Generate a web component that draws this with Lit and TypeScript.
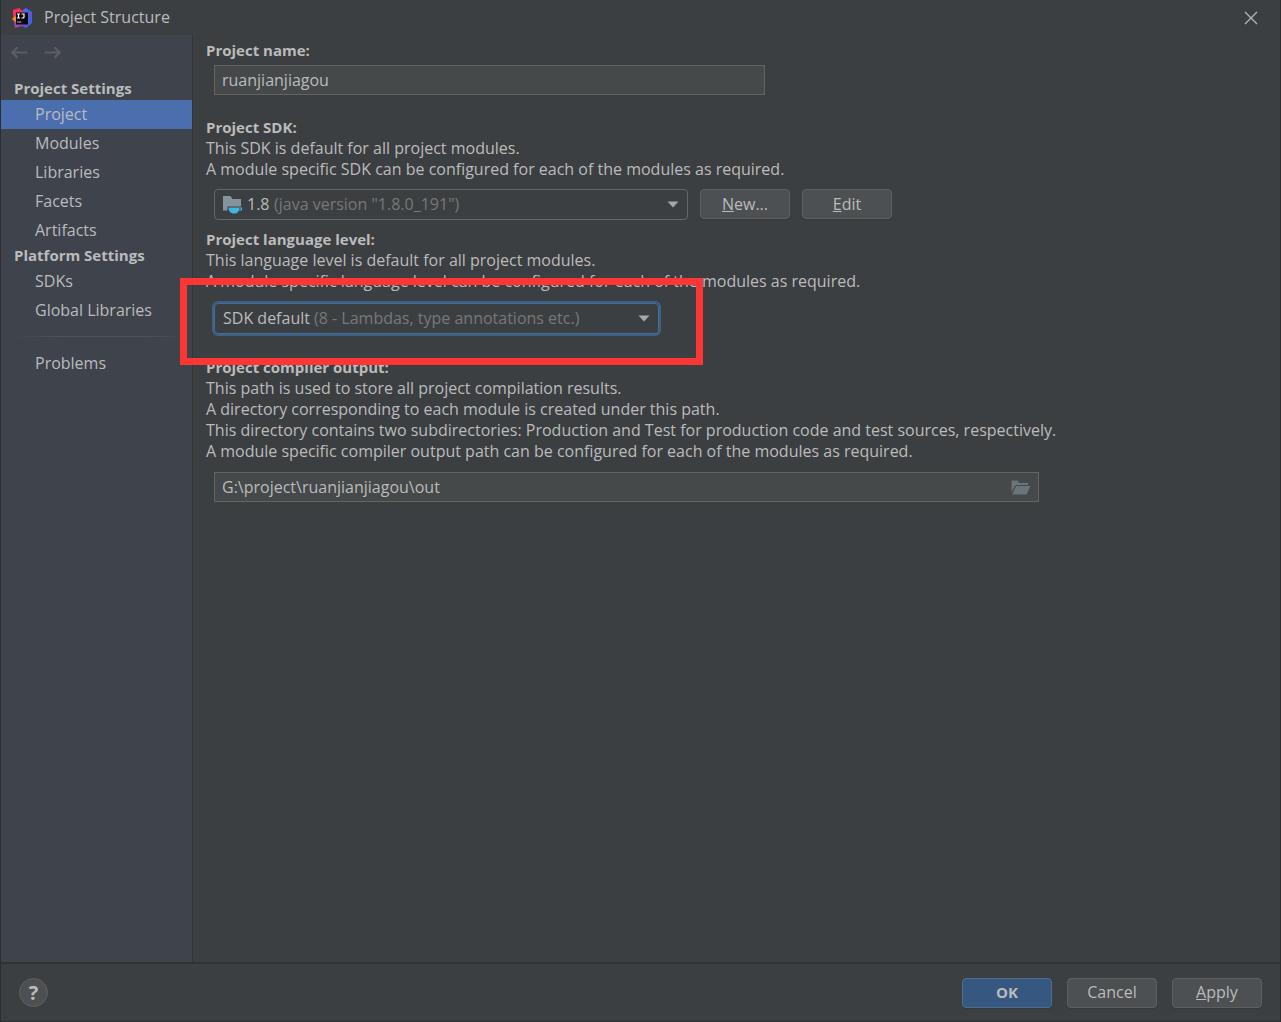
import { LitElement, html, css, svg, nothing } from "lit";
import { customElement, state } from "lit/decorators.js";
import { classMap } from "lit/directives/class-map.js";

const ideLogo = svg`
  <svg class="logo" viewBox="0 0 20 20" width="20" height="20" aria-hidden="true">
    <defs>
      <linearGradient id="pink" x1="0" y1="0" x2="1" y2="1">
        <stop offset="0" stop-color="#fe315d" /><stop offset="1" stop-color="#d83078" />
      </linearGradient>
      <linearGradient id="blue" x1="0" y1="0" x2="1" y2="1">
        <stop offset="0" stop-color="#2f7df0" /><stop offset="0.6" stop-color="#5a55e0" /><stop offset="1" stop-color="#2b6fe8" />
      </linearGradient>
    </defs>
    <path d="M11 2 14 0 20 4 20 15 14 20 8 17Z" fill="url(#blue)" />
    <path d="M1 2 7 0 11 3 11 9 3 12 1 8Z" fill="url(#pink)" />
    <path d="M0 11 3 8 6 12 4 15Z" fill="#f68b2c" />
    <path d="M2 14 8 13 13 17 3 20Z" fill="#a045b8" />
    <path d="M4 4.500H16V16.500H4Z" fill="#0a0a0c" />
    <path d="M5 6H8M6.500 6V10M5 10H8M9.500 6H12V9Q12 10 11 10H9.500" stroke="#fff" stroke-width="1.200" fill="none" />
    <path d="M5 14H9.500" stroke="#aaa" stroke-width="1" />
  </svg>`;

const closeIcon = svg`
  <svg viewBox="0 0 14 14" width="14" height="14" aria-hidden="true">
    <path d="M1 1 13 13M13 1 1 13" stroke="#b4b7b9" stroke-width="1.300" fill="none" />
  </svg>`;

const backIcon = svg`
  <svg viewBox="0 0 17 13" width="17" height="13" aria-hidden="true">
    <path d="M16.500 6.500H1.500M6.500 1.200 1.200 6.500 6.500 11.800" stroke="#5b5e61" stroke-width="2.200" fill="none" />
  </svg>`;

const forwardIcon = svg`
  <svg viewBox="0 0 17 13" width="17" height="13" aria-hidden="true">
    <path d="M0.500 6.500H15.500M10.500 1.200 15.800 6.500 10.500 11.800" stroke="#5b5e61" stroke-width="2.200" fill="none" />
  </svg>`;

const sdkIcon = svg`
  <svg viewBox="0 0 20 18" width="20" height="18" aria-hidden="true">
    <path d="M0 0H7.500L9.500 3H18V10.500H4.500V14.500H0Z" fill="#87939a" />
    <path d="M5.500 11.500H19V14.500H16Q14.500 17.500 12 17.500H9.500Q5.500 16 5.500 11.500ZM16 12.500V13.600H18V12.500Z" fill="#40b6e0" fill-rule="evenodd" />
  </svg>`;

const folderIcon = svg`
  <svg viewBox="0 0 20 15" width="20" height="15" aria-hidden="true">
    <path d="M0.500 12V0.500H6.500L8.500 3H17V5H4.500Z" fill="#68757b" />
    <path d="M5 6H19.500L15.500 14.500H1Z" fill="#68757b" />
  </svg>`;

const dropArrow = svg`
  <svg class="arrow" viewBox="0 0 12 7" width="12" height="7" aria-hidden="true">
    <path d="M0.500 0.500H11.500L6 6.500Z" fill="#a5a8aa" />
  </svg>`;

const GROUPS = [
  { title: "Project Settings", items: ["Project", "Modules", "Libraries", "Facets", "Artifacts"] },
  { title: "Platform Settings", items: ["SDKs", "Global Libraries"] },
];

@customElement("app-root")
export class AppRoot extends LitElement {
  @state() private current = "Project";

  static styles = css`
    :host {
      display: block;
      font: 16px/21px "Open Sans", "Noto Sans", sans-serif;
      color: #bbbbbb;
    }
    * { box-sizing: border-box; }
    button, input, select { font: inherit; color: inherit; margin: 0; }
    svg { display: block; flex: none; }
    .window {
      display: flex;
      flex-direction: column;
      min-height: 100vh;
      background: #3c3f41;
      border: 1px solid #2b2d2e;
      border-top: 0;
    }
    .titlebar {
      display: flex;
      align-items: center;
      gap: 12px;
      height: 35px;
      padding: 0 22px 0 11px;
    }
    .title { flex: 1; margin: 0; font: inherit; }
    .plain {
      display: flex;
      padding: 0;
      border: 0;
      background: none;
    }
    .body { display: flex; flex: 1; }
    .sidebar {
      flex: none;
      width: 192px;
      background: #3e434c;
      border-right: 1px solid #323436;
    }
    .history { display: flex; gap: 16px; height: 43px; padding: 11px 10px 0; }
    .group {
      margin: 0;
      padding: 0 0 2px 13px;
      font-size: 15px;
      line-height: 20px;
      font-weight: 700;
    }
    .items { margin: 0; padding: 0; list-style: none; }
    .item {
      display: block;
      padding-left: 34px;
      line-height: 29px;
      color: inherit;
      text-decoration: none;
    }
    .item.selected { background: #4b6eaf; }
    .divider {
      height: 1px;
      margin: 11px 0 12px 10px;
      border: 0;
      background: linear-gradient(90deg, #3e434c, #515457 30%, #515457 70%, #3e434c);
    }
    .content { flex: 1; min-width: 0; padding: 5px 13px; }
    .section { margin-bottom: 22px; }
    .section.tight { margin-bottom: 9px; }
    .heading { display: block; font-size: 15px; font-weight: 700; }
    .text { margin: 0; }
    .row { display: flex; gap: 12px; margin: 9px 0 0 8px; }
    .row.near { margin-top: 4px; }
    .row.far { margin-top: 10px; }
    .box {
      display: flex;
      align-items: center;
      height: 30px;
      padding: 0 7px;
      background: #45494a;
      border: 1px solid #646464;
    }
    .box.name { flex: 0 1 551px; }
    .box.path { flex: 0 1 825px; }
    .field {
      flex: 1;
      min-width: 0;
      padding: 0;
      border: 0;
      outline: 0;
      background: none;
    }
    .combo {
      display: flex;
      align-items: center;
      gap: 4px;
      height: 31px;
      padding: 0 8px;
      border: 1px solid #646668;
      border-radius: 4px;
    }
    .combo.sdk { flex: 0 1 474px; }
    .combo.level {
      flex: 1;
      border-color: #466d94;
      box-shadow: 0 0 0 2px #3d6185;
    }
    .choice {
      padding: 0;
      border: 0;
      outline: 0;
      background: none;
      appearance: none;
    }
    .hint { flex: 1; color: #787878; white-space: nowrap; overflow: hidden; }
    .highlighted { position: relative; display: flex; flex: 0 1 445px; margin: 1px 0; }
    .mark {
      position: absolute;
      inset: -25px -44px -31px -34px;
      border: 7px solid #fc3635;
      pointer-events: none;
    }
    .button {
      width: 90px;
      height: 30px;
      padding: 0;
      background: #4c5052;
      border: 1px solid #5e6060;
      border-radius: 4px;
      box-shadow: 0 1px 1px #35383a;
    }
    .button.primary {
      background: #365880;
      border-color: #4c708c;
      font-size: 15px;
      font-weight: 700;
    }
    .footer {
      display: flex;
      align-items: center;
      gap: 15px;
      height: 59px;
      padding: 0 18px;
      border-top: 2px solid #323232;
    }
    .help {
      width: 29px;
      height: 29px;
      margin-right: auto;
      padding: 0;
      border: 1px solid #5e6060;
      border-radius: 50%;
      background: #4c5052;
      font-size: 20px;
      font-weight: 700;
    }
  `;

  private item(name: string) {
    const selected = this.current === name;
    return html`<li>
      <a
        class=${classMap({ item: true, selected })}
        href="#"
        aria-current=${selected ? "page" : nothing}
        @click=${(e: Event) => {
          e.preventDefault();
          this.current = name;
        }}
        >${name}</a
      >
    </li>`;
  }

  render() {
    return html`
      <div class="window">
        <header class="titlebar">
          ${ideLogo}
          <h1 class="title">Project Structure</h1>
          <button class="plain" aria-label="Close">${closeIcon}</button>
        </header>
        <div class="body">
          <nav class="sidebar">
            <div class="history">
              <button class="plain" aria-label="Back" disabled>${backIcon}</button>
              <button class="plain" aria-label="Forward" disabled>${forwardIcon}</button>
            </div>
            ${GROUPS.map(
              (g) => html`<h2 class="group">${g.title}</h2>
                <ul class="items">${g.items.map((i) => this.item(i))}</ul>`
            )}
            <hr class="divider" />
            <ul class="items">${this.item("Problems")}</ul>
          </nav>
          <main class="content">
            <section class="section">
              <label class="heading" for="name">Project name:</label>
              <div class="row near">
                <div class="box name"><input class="field" id="name" value="ruanjianjiagou" /></div>
              </div>
            </section>
            <section class="section tight">
              <label class="heading" for="sdk">Project SDK:</label>
              <p class="text">This SDK is default for all project modules.</p>
              <p class="text">A module specific SDK can be configured for each of the modules as required.</p>
              <div class="row">
                <div class="combo sdk">
                  ${sdkIcon}
                  <select class="choice" id="sdk"><option>1.8</option></select>
                  <span class="hint">(java version "1.8.0_191")</span>
                  ${dropArrow}
                </div>
                <button class="button"><u>N</u>ew...</button>
                <button class="button"><u>E</u>dit</button>
              </div>
            </section>
            <section class="section">
              <label class="heading" for="level">Project language level:</label>
              <p class="text">This language level is default for all project modules.</p>
              <p class="text">A module specific language level can be configured for each of the modules as required.</p>
              <div class="row far">
                <div class="highlighted">
                  <div class="combo level">
                    <select class="choice" id="level"><option>SDK default</option></select>
                    <span class="hint">(8 - Lambdas, type annotations etc.)</span>
                    ${dropArrow}
                  </div>
                  <div class="mark"></div>
                </div>
              </div>
            </section>
            <section class="section">
              <label class="heading" for="output">Project compiler output:</label>
              <p class="text">This path is used to store all project compilation results.</p>
              <p class="text">A directory corresponding to each module is created under this path.</p>
              <p class="text">This directory contains two subdirectories: Production and Test for production code and test sources, respectively.</p>
              <p class="text">A module specific compiler output path can be configured for each of the modules as required.</p>
              <div class="row far">
                <div class="box path">
                  <input class="field" id="output" value="G:\\project\\ruanjianjiagou\\out" />
                  <button class="plain" aria-label="Browse">${folderIcon}</button>
                </div>
              </div>
            </section>
          </main>
        </div>
        <footer class="footer">
          <button class="help" aria-label="Help">?</button>
          <button class="button primary">OK</button>
          <button class="button">Cancel</button>
          <button class="button"><u>A</u>pply</button>
        </footer>
      </div>
    `;
  }
}
